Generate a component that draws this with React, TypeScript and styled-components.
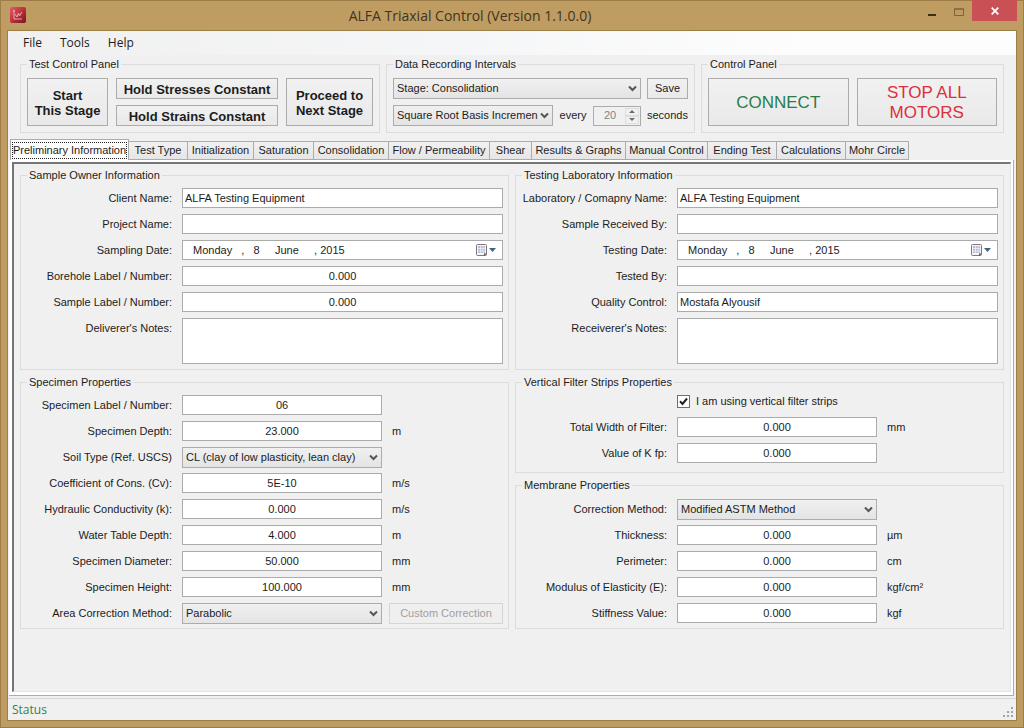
import React, { useId, useState } from 'react';
import styled, { createGlobalStyle } from 'styled-components';

const GlobalStyle = createGlobalStyle`
  *, *::before, *::after { box-sizing: border-box; }
  body {
    margin: 0;
    background: #be9c62;
    color: #1c1c1c;
    font: 11px/13px "Liberation Sans", Arial, sans-serif;
  }
  button, input, select, textarea {
    margin: 0;
    color: inherit;
    font: inherit;
  }
`;

const Window = styled.div`
  display: flex;
  flex-direction: column;
  min-height: 100vh;
  padding: 0 7px 7px;
  background: #be9c62;
  box-shadow: inset 0 0 0 1px #9c7d47;
`;

const TitleBar = styled.header`
  display: flex;
  align-items: flex-start;
  height: 30px;
  padding-left: 3px;
`;

const AppIcon = styled.svg`
  width: 16px;
  height: 16px;
  margin-top: 7px;
`;

const Title = styled.h1`
  flex: 1;
  margin: 0;
  padding-right: 4px;
  color: #43341f;
  font: 400 14px/32px "Open Sans", "Noto Sans", sans-serif;
  text-align: center;
`;

const CaptionButton = styled.button<{ $close?: boolean }>`
  display: grid;
  place-items: center;
  width: ${(p) => (p.$close ? 45 : 27)}px;
  height: 21px;
  margin-top: ${(p) => (p.$close ? 0 : 1)}px;
  padding: 0;
  border: 0;
  background: ${(p) => (p.$close ? '#c95156' : 'transparent')};
`;

const Client = styled.div`
  display: flex;
  flex: 1;
  flex-direction: column;
  border: 1px solid #9a8048;
  background: #f0f0f0;
`;

const MenuBar = styled.nav`
  display: flex;
  height: 24px;
  padding-left: 6px;
  background: linear-gradient(90deg, #f0f0f0, #f5f6f7 45%, #fdfdfd 80%);
`;

const MenuItem = styled.button`
  padding: 0 9px;
  border: 0;
  background: transparent;
  font: 12px/24px "Open Sans", "Noto Sans", sans-serif;
`;

const ToolGroups = styled.div`
  display: grid;
  grid-template-columns: 360fr 309fr 303fr;
  gap: 6px;
  padding: 3px 12px 6px;
`;

const Group = styled.fieldset`
  min-width: 0;
  margin: 0;
  padding: 0 5px 0 6px;
  border: 1px solid #dcdcdc;
`;

const ToolGroup = styled(Group)`
  padding: 0 6px;
`;

const Legend = styled.legend`
  padding: 0 2px;
  line-height: 13px;
`;

const ToolBody = styled.div<{ $columns: string; $gap: number }>`
  display: grid;
  grid-template-columns: ${(p) => p.$columns};
  grid-template-rows: 21px 21px;
  gap: 6px ${(p) => p.$gap}px;
  align-items: center;
  padding: 7px 0 6px;
`;

const PushButton = styled.button<{ $tall?: boolean; $tone?: string; $size?: 'bold' | 'large' }>`
  grid-row: ${(p) => (p.$tall ? 'span 2' : 'auto')};
  align-self: stretch;
  min-width: 0;
  padding: ${(p) => (p.$size ? '2px 0 0' : '0')};
  border: 1px solid #acacac;
  background: linear-gradient(#f1f1f1, #e9e9e9);
  color: ${(p) => p.$tone ?? '#1c1c1c'};
  font-size: ${(p) => (p.$size === 'large' ? 17 : p.$size === 'bold' ? 13 : 11)}px;
  font-weight: ${(p) => (p.$size === 'bold' ? 700 : 400)};
  line-height: ${(p) => (p.$size === 'large' ? 20 : p.$size === 'bold' ? 15 : 13)}px;
  white-space: pre-line;

  &:disabled {
    border-color: #d5d5d5;
    background: #efefef;
    color: #a0a0a0;
  }
`;

const IntervalRow = styled.div`
  display: grid;
  grid-template-columns: 160fr 40px 48px;
  align-items: center;
  text-align: center;
`;

const SelectBox = styled.div`
  display: grid;
  align-items: center;
  width: 100%;
  min-width: 0;
  height: 21px;

  > * { grid-area: 1 / 1; }
  > svg {
    justify-self: end;
    margin-right: 4px;
    pointer-events: none;
  }
`;

const NativeSelect = styled.select`
  appearance: none;
  width: 100%;
  height: 21px;
  padding: 0 14px 0 3px;
  border: 1px solid #acacac;
  border-radius: 0;
  background: linear-gradient(#f0f0f0, #e4e4e4);
  text-overflow: clip;
`;

const Spinner = styled.div`
  display: flex;
  height: 20px;
  padding: 1px;
  border: 1px solid #acacac;
  color: #838383;
`;

const SpinnerInput = styled.input`
  flex: 1;
  width: 0;
  padding: 0;
  border: 0;
  background: transparent;
  text-align: center;
`;

const SpinnerButtons = styled.div`
  display: grid;
  grid-template-rows: 1fr 1fr;
  width: 14px;
`;

const SpinnerButton = styled.button`
  display: grid;
  place-items: center;
  padding: 0;
  border: 1px solid #dedede;
  background: #f0f0f0;
`;

const TabStrip = styled.div`
  display: flex;
  align-items: flex-end;
  padding-left: 2px;
`;

const Tab = styled.button<{ $width: number; $active: boolean }>`
  flex: 0 1 ${(p) => p.$width}px;
  min-width: 0;
  height: ${(p) => (p.$active ? 21 : 19)}px;
  padding: ${(p) => (p.$active ? '1px' : '0')};
  border: 1px solid #acacac;
  border-bottom-width: ${(p) => (p.$active ? 0 : 1)}px;
  border-left-width: ${(p) => (p.$active ? 1 : 0)}px;
  background: ${(p) => (p.$active ? '#fff' : 'linear-gradient(#f1f1f1, #e6e6e6)')};
  line-height: 17px;
  white-space: nowrap;
`;

const TabFocus = styled.span`
  display: block;
  border: 1px dotted #222;
  line-height: 15px;
`;

const TabFrame = styled.div`
  display: flex;
  flex: 1;
  margin: 0 2px 2px 1px;
  padding: 2px 2px 3px 3px;
  border: solid #acacac;
  border-width: 0 1px 1px 0;
  background: #fff;
`;

const TabPage = styled.main`
  display: grid;
  flex: 1;
  grid-template-columns: minmax(0, 1fr) minmax(0, 1fr);
  gap: 6px;
  align-items: start;
  padding: 5px 6px 20px;
  border: 1px solid #e3e3e3;
  border-top: 2px solid #757575;
  border-left: 2px solid #757575;
  background: #f0f0f0;
`;

const Column = styled.div`
  display: grid;
  gap: 6px;
`;

const FormGrid = styled.div<{ $top?: number; $bottom?: number }>`
  display: grid;
  gap: 6px;
  padding: ${(p) => p.$top ?? 6}px 0 ${(p) => p.$bottom ?? 5}px;
`;

const FormRow = styled.div`
  display: grid;
  grid-template-columns: 145px 1fr;
  align-items: start;

  > :nth-child(2) { margin-left: 10px; width: calc(100% - 10px); }
`;

const UnitFormRow = styled(FormRow)`
  grid-template-columns: 145px 210fr 121fr;
  height: 20px;

  > :nth-child(3) { margin-left: 7px; }
`;

const FieldLabel = styled.label`
  line-height: 20px;
  text-align: right;
  white-space: nowrap;
`;

const Unit = styled.span`
  padding-left: 3px;
  line-height: 20px;
`;

const TextInput = styled.input<{ $center?: boolean }>`
  height: 20px;
  min-width: 0;
  padding: 0 2px;
  border: 1px solid #ababab;
  background: #fff;
  text-align: ${(p) => (p.$center ? 'center' : 'left')};
`;

const Notes = styled.textarea`
  display: block;
  height: 46px;
  padding: 2px;
  border: 1px solid #ababab;
  background: #fff;
  resize: none;
`;

const DateBox = styled.div`
  display: flex;
  align-items: center;
  height: 20px;
  border: 1px solid #ababab;
  background: #fff;
`;

const DateInput = styled.input`
  flex: 1;
  min-width: 0;
  padding: 0 0 0 10px;
  border: 0;
  background: transparent;
`;

const CalendarButton = styled.button`
  display: flex;
  padding: 0 5px 0 0;
  border: 0;
  background: transparent;
`;

const CheckRow = styled.label`
  display: flex;
  align-items: flex-start;
  gap: 6px;
  height: 16px;
  padding-left: 155px;
`;

const CheckFrame = styled.span`
  display: grid;
  width: 13px;
  height: 13px;
  > * { grid-area: 1 / 1; }
  > svg { pointer-events: none; }
  > input:not(:checked) + svg { visibility: hidden; }
`;

const CheckInput = styled.input`
  appearance: none;
  width: 13px;
  height: 13px;
  border: 1px solid #6f6f6f;
  background: #fff;
`;

const StatusBar = styled.footer`
  display: flex;
  align-items: flex-end;
  justify-content: space-between;
  height: 22px;
  padding: 0 2px 0 4px;
  border-top: 1px solid #d7d7d7;
  color: #2f8446;
  font: 12px/21px "Open Sans", "Noto Sans", sans-serif;
`;

function Chevron() {
  return (
    <svg width="9" height="7" viewBox="0 0 9 7">
      <path d="M1 1.5 4.5 5 8 1.5" fill="none" stroke="#555" strokeWidth="2" />
    </svg>
  );
}

function Dropdown({ id, value, label }: { id?: string; value: string; label?: string }) {
  return (
    <SelectBox>
      <NativeSelect id={id} aria-label={label} defaultValue={value}>
        <option>{value}</option>
      </NativeSelect>
      <Chevron />
    </SelectBox>
  );
}

type FieldProps = {
  label: string;
  value?: string;
  kind?: 'text' | 'number' | 'date' | 'notes' | 'select';
  wide?: boolean;
  unit?: string;
  action?: string;
};

function Field({ label, value = '', kind = 'text', wide, unit, action }: FieldProps) {
  const id = useId();
  const Row = wide ? FormRow : UnitFormRow;
  return (
    <Row>
      <FieldLabel htmlFor={id}>{label}</FieldLabel>
      {kind === 'select' && <Dropdown id={id} value={value} />}
      {kind === 'notes' && <Notes id={id} defaultValue={value} />}
      {kind === 'date' && (
        <DateBox>
          <DateInput id={id} defaultValue={value} />
          <CalendarButton aria-label="Open calendar">
            <svg width="22" height="14" viewBox="0 0 22 14">
              <rect x="1.5" y="1.5" width="10" height="11" rx="1" fill="#f6f6fa" stroke="#85757a" />
              <rect x="3" y="3" width="7" height="7" fill="#b4bdd4" />
              <path d="M3 5.5h7M3 8h7M5.5 3v7M8 3v7" stroke="#eef0f7" strokeWidth=".8" />
              <path d="M9 13v-2.500h3z" fill="#5d5258" />
              <path d="M14 5h7l-3.500 4z" fill="#44617f" />
            </svg>
          </CalendarButton>
        </DateBox>
      )}
      {(kind === 'text' || kind === 'number') && (
        <TextInput id={id} $center={kind === 'number'} defaultValue={value} />
      )}
      {unit && <Unit>{unit}</Unit>}
      {action && <PushButton disabled>{action}</PushButton>}
    </Row>
  );
}

const dateText = 'Monday   ,   8     June     , 2015';

const ownerFields: FieldProps[] = [
  { label: 'Client Name:', value: 'ALFA Testing Equipment' },
  { label: 'Project Name:' },
  { label: 'Sampling Date:', value: dateText, kind: 'date' },
  { label: 'Borehole Label / Number:', value: '0.000', kind: 'number' },
  { label: 'Sample Label / Number:', value: '0.000', kind: 'number' },
  { label: "Deliverer's Notes:", kind: 'notes' },
];

const laboratoryFields: FieldProps[] = [
  { label: 'Laboratory / Comapny Name:', value: 'ALFA Testing Equipment' },
  { label: 'Sample Received By:' },
  { label: 'Testing Date:', value: dateText, kind: 'date' },
  { label: 'Tested By:' },
  { label: 'Quality Control:', value: 'Mostafa Alyousif' },
  { label: "Receiverer's Notes:", kind: 'notes' },
];

const specimenFields: FieldProps[] = [
  { label: 'Specimen Label / Number:', value: '06', kind: 'number' },
  { label: 'Specimen Depth:', value: '23.000', kind: 'number', unit: 'm' },
  { label: 'Soil Type (Ref. USCS)', value: 'CL (clay of low plasticity, lean clay)', kind: 'select' },
  { label: 'Coefficient of Cons. (Cv):', value: '5E-10', kind: 'number', unit: 'm/s' },
  { label: 'Hydraulic Conductivity (k):', value: '0.000', kind: 'number', unit: 'm/s' },
  { label: 'Water Table Depth:', value: '4.000', kind: 'number', unit: 'm' },
  { label: 'Specimen Diameter:', value: '50.000', kind: 'number', unit: 'mm' },
  { label: 'Specimen Height:', value: '100.000', kind: 'number', unit: 'mm' },
  { label: 'Area Correction Method:', value: 'Parabolic', kind: 'select', action: 'Custom Correction' },
];

const membraneFields: FieldProps[] = [
  { label: 'Correction Method:', value: 'Modified ASTM Method', kind: 'select' },
  { label: 'Thickness:', value: '0.000', kind: 'number', unit: 'µm' },
  { label: 'Perimeter:', value: '0.000', kind: 'number', unit: 'cm' },
  { label: 'Modulus of Elasticity (E):', value: '0.000', kind: 'number', unit: 'kgf/cm²' },
  { label: 'Stiffness Value:', value: '0.000', kind: 'number', unit: 'kgf' },
];

const tabs: [string, number][] = [
  ['Preliminary Information', 119],
  ['Test Type', 59],
  ['Initialization', 66],
  ['Saturation', 60],
  ['Consolidation', 75],
  ['Flow / Permeability', 101],
  ['Shear', 42],
  ['Results & Graphs', 94],
  ['Manual Control', 82],
  ['Ending Test', 69],
  ['Calculations', 69],
  ['Mohr Circle', 63],
];

export default function App() {
  const [active, setActive] = useState(0);
  return (
    <>
      <GlobalStyle />
      <Window>
        <TitleBar>
          <AppIcon viewBox="0 0 16 16">
            <defs>
              <linearGradient id="badge" x1="0" y1="0" x2="1" y2="1">
                <stop offset="0" stopColor="#d9626a" />
                <stop offset=".5" stopColor="#bd2f3a" />
                <stop offset="1" stopColor="#6f1a1c" />
              </linearGradient>
            </defs>
            <rect width="16" height="16" rx="2" fill="url(#badge)" />
            <path d="M4 3v9h8M3 4h2M5 7l2 3 1.500-4 1 3L12 5" fill="none" stroke="#efb6ba" strokeWidth=".9" />
          </AppIcon>
          <Title>ALFA Triaxial Control (Version 1.1.0.0)</Title>
          <CaptionButton aria-label="Minimize">
            <svg width="10" height="10" viewBox="0 0 10 10">
              <path d="M1 7h8v2H1z" fill="#3b2e1a" />
            </svg>
          </CaptionButton>
          <CaptionButton aria-label="Maximize">
            <svg width="10" height="8" viewBox="0 0 10 8">
              <path d="M.5 1h9v6.500h-9zM0 1h10" fill="none" stroke="#7d6337" />
            </svg>
          </CaptionButton>
          <CaptionButton $close aria-label="Close">
            <svg width="8" height="8" viewBox="0 0 8 8">
              <path d="M.7.7l6.600 6.600M7.300.7.7 7.300" stroke="#fff" strokeWidth="1.700" />
            </svg>
          </CaptionButton>
        </TitleBar>
        <Client>
          <MenuBar>
            <MenuItem>File</MenuItem>
            <MenuItem>Tools</MenuItem>
            <MenuItem>Help</MenuItem>
          </MenuBar>
          <ToolGroups>
            <ToolGroup>
              <Legend>Test Control Panel</Legend>
              <ToolBody $columns="81fr 162fr 87fr" $gap={8}>
                <PushButton $tall $size="bold">{'Start\nThis Stage'}</PushButton>
                <PushButton $size="bold">Hold Stresses Constant</PushButton>
                <PushButton $tall $size="bold">{'Proceed to\nNext Stage'}</PushButton>
                <PushButton $size="bold">Hold Strains Constant</PushButton>
              </ToolBody>
            </ToolGroup>
            <ToolGroup>
              <Legend>Data Recording Intervals</Legend>
              <ToolBody $columns="minmax(0, 1fr) 41px" $gap={6}>
                <Dropdown label="Stage" value="Stage: Consolidation" />
                <PushButton>Save</PushButton>
                <IntervalRow>
                  <Dropdown label="Increment basis" value="Square Root Basis Incremen" />
                  <label htmlFor="interval">every</label>
                  <Spinner>
                    <SpinnerInput id="interval" defaultValue="20" disabled />
                    <SpinnerButtons>
                      <SpinnerButton disabled aria-label="Increase">
                        <svg width="6" height="3" viewBox="0 0 6 3"><path d="M0 3l3-3 3 3z" fill="#6d6d6d" /></svg>
                      </SpinnerButton>
                      <SpinnerButton disabled aria-label="Decrease">
                        <svg width="6" height="3" viewBox="0 0 6 3"><path d="M0 0l3 3 3-3z" fill="#6d6d6d" /></svg>
                      </SpinnerButton>
                    </SpinnerButtons>
                  </Spinner>
                </IntervalRow>
                <span>seconds</span>
              </ToolBody>
            </ToolGroup>
            <ToolGroup>
              <Legend>Control Panel</Legend>
              <ToolBody $columns="1fr 1fr" $gap={8}>
                <PushButton $tall $size="large" $tone="#2a7d4b">CONNECT</PushButton>
                <PushButton $tall $size="large" $tone="#dc2f3c">{'STOP ALL\nMOTORS'}</PushButton>
              </ToolBody>
            </ToolGroup>
          </ToolGroups>
          <TabStrip role="tablist">
            {tabs.map(([name, width], i) => (
              <Tab
                key={name}
                role="tab"
                aria-selected={i === active}
                $width={width}
                $active={i === active}
                onClick={() => setActive(i)}
              >
                {i === active ? <TabFocus>{name}</TabFocus> : name}
              </Tab>
            ))}
          </TabStrip>
          <TabFrame>
            <TabPage>
              <Column>
                <Group>
                  <Legend>Sample Owner Information</Legend>
                  <FormGrid>
                    {ownerFields.map((f) => <Field key={f.label} wide {...f} />)}
                  </FormGrid>
                </Group>
                <Group>
                  <Legend>Specimen Properties</Legend>
                  <FormGrid>
                    {specimenFields.map((f) => <Field key={f.label} {...f} />)}
                  </FormGrid>
                </Group>
              </Column>
              <Column>
                <Group>
                  <Legend>Testing Laboratory Information</Legend>
                  <FormGrid>
                    {laboratoryFields.map((f) => <Field key={f.label} wide {...f} />)}
                  </FormGrid>
                </Group>
                <Group>
                  <Legend>Vertical Filter Strips Properties</Legend>
                  <FormGrid $bottom={9}>
                    <CheckRow>
                      <CheckFrame>
                        <CheckInput type="checkbox" defaultChecked />
                        <svg width="13" height="13" viewBox="0 0 13 13">
                          <path d="M3 6.300 5.500 9 10 3.500" fill="none" stroke="#222" strokeWidth="2" />
                        </svg>
                      </CheckFrame>
                      I am using vertical filter strips
                    </CheckRow>
                    <Field label="Total Width of Filter:" value="0.000" kind="number" unit="mm" />
                    <Field label="Value of K fp:" value="0.000" kind="number" />
                  </FormGrid>
                </Group>
                <Group>
                  <Legend>Membrane Properties</Legend>
                  <FormGrid $top={7}>
                    {membraneFields.map((f) => <Field key={f.label} {...f} />)}
                  </FormGrid>
                </Group>
              </Column>
            </TabPage>
          </TabFrame>
          <StatusBar>
            <span>Status</span>
            <svg width="12" height="14" viewBox="0 0 12 14">
              <path d="M9 1h2v2H9zM5 5h2v2H5zM9 5h2v2H9zM1 9h2v2H1zM5 9h2v2H5zM9 9h2v2H9z" fill="#a3a3a3" />
            </svg>
          </StatusBar>
        </Client>
      </Window>
    </>
  );
}
